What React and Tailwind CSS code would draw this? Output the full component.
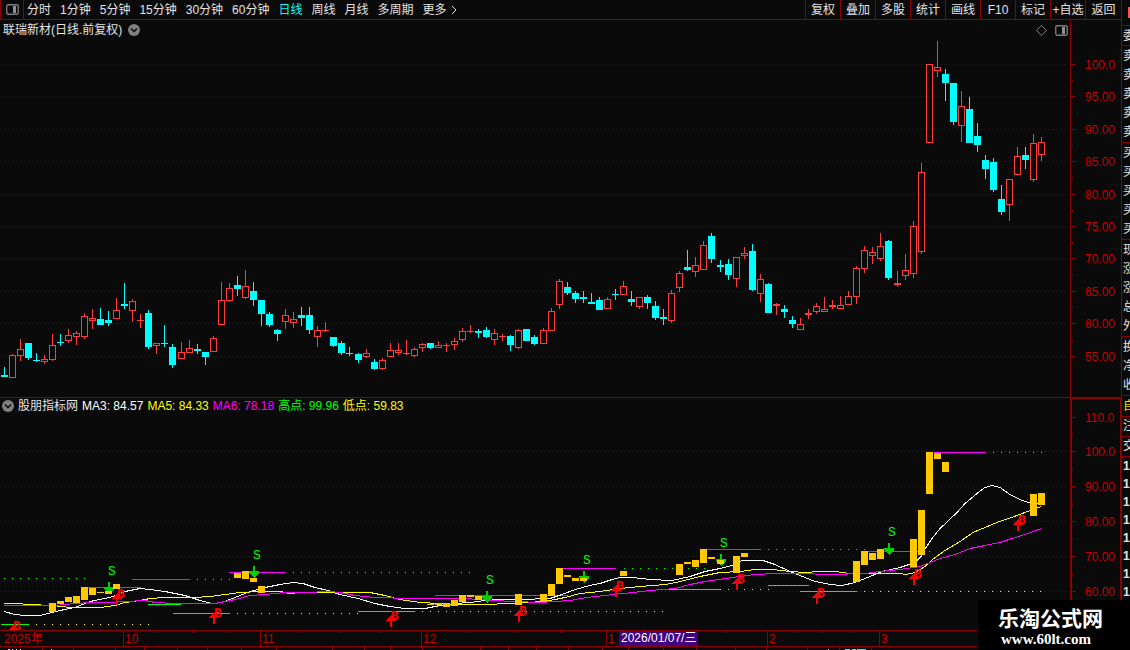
import React, { useState } from "react";

const periods = ["分时", "1分钟", "5分钟", "15分钟", "30分钟", "60分钟", "日线", "周线", "月线", "多周期"];
const tools = ["复权", "叠加", "多股", "统计", "画线", "F10", "标记", "+自选", "返回"];

// high, body top, body bottom, low, 1 = up / 0 = down
const candles = [
  [367, 375, 377, 377, 0], [354, 355, 378, 378, 1], [339, 349, 356, 361, 1], [343, 343, 358, 360, 0],
  [353, 360, 361, 362, 0], [355, 359, 362, 364, 1], [334, 345, 360, 361, 1], [334, 342, 343, 346, 0],
  [329, 335, 341, 343, 1], [331, 333, 337, 345, 1], [313, 316, 337, 339, 1], [309, 318, 321, 329, 1],
  [308, 319, 325, 325, 0], [311, 320, 323, 326, 0], [298, 310, 319, 319, 1], [283, 304, 306, 309, 0],
  [299, 301, 311, 322, 1], [314, 320, 321, 328, 1], [310, 313, 347, 349, 0], [343, 343, 346, 354, 1],
  [325, 343, 344, 347, 0], [344, 347, 365, 368, 0], [342, 352, 359, 359, 1], [340, 348, 353, 353, 1],
  [344, 349, 351, 354, 0], [352, 352, 357, 365, 0], [336, 338, 352, 352, 1], [282, 300, 325, 325, 1],
  [283, 288, 301, 302, 1], [276, 285, 289, 296, 0], [270, 286, 298, 299, 1], [282, 291, 300, 306, 0],
  [300, 300, 314, 326, 0], [312, 314, 325, 327, 0], [329, 330, 334, 341, 0], [309, 315, 322, 329, 1],
  [312, 319, 323, 328, 1], [307, 315, 318, 326, 0], [307, 315, 330, 334, 0], [326, 330, 337, 347, 1],
  [322, 330, 331, 332, 1], [337, 337, 346, 347, 0], [341, 343, 353, 355, 0], [347, 353, 354, 356, 0],
  [353, 354, 360, 363, 0], [349, 353, 357, 358, 1], [359, 362, 369, 370, 0], [358, 360, 369, 370, 1],
  [343, 350, 357, 357, 1], [343, 350, 353, 355, 1], [340, 353, 354, 355, 1], [347, 349, 356, 357, 1],
  [343, 344, 348, 352, 1], [343, 343, 348, 349, 0], [341, 345, 348, 348, 1], [343, 345, 346, 352, 1],
  [338, 341, 345, 350, 1], [328, 331, 340, 342, 1], [325, 331, 332, 333, 1], [329, 331, 333, 338, 0],
  [327, 330, 337, 338, 0], [329, 333, 340, 345, 1], [334, 336, 337, 341, 1], [335, 336, 345, 351, 0],
  [329, 330, 348, 349, 1], [329, 329, 341, 341, 0], [335, 337, 344, 345, 0], [328, 330, 344, 344, 1],
  [308, 311, 331, 331, 1], [279, 281, 305, 309, 1], [282, 287, 293, 295, 0], [291, 293, 299, 303, 0],
  [291, 297, 299, 303, 0], [293, 302, 304, 304, 0], [297, 300, 310, 310, 0], [297, 299, 309, 309, 1],
  [289, 294, 295, 300, 0], [281, 286, 295, 295, 1], [291, 299, 302, 306, 0], [297, 297, 307, 309, 1],
  [295, 297, 303, 309, 0], [301, 306, 318, 320, 0], [309, 317, 319, 325, 0], [290, 293, 321, 323, 1],
  [271, 273, 288, 292, 1], [250, 267, 270, 271, 0], [257, 265, 272, 277, 1], [241, 245, 270, 270, 1],
  [233, 236, 259, 263, 0], [260, 265, 267, 272, 0], [259, 264, 275, 280, 0], [257, 257, 279, 287, 1],
  [247, 253, 256, 259, 1], [244, 251, 290, 291, 0], [274, 279, 294, 302, 1], [283, 284, 313, 313, 0],
  [303, 304, 306, 315, 1], [305, 309, 312, 318, 0], [316, 320, 324, 328, 0], [318, 324, 330, 330, 1],
  [309, 313, 315, 319, 1], [303, 306, 312, 314, 1], [297, 309, 312, 312, 1], [300, 305, 307, 309, 1],
  [296, 305, 309, 309, 1], [291, 296, 305, 305, 1], [266, 268, 297, 304, 1], [246, 250, 269, 273, 1],
  [247, 252, 256, 264, 1], [233, 246, 259, 261, 1], [240, 241, 278, 280, 0], [271, 283, 285, 287, 1],
  [254, 270, 276, 280, 1], [221, 226, 274, 278, 1], [163, 172, 252, 254, 1], [64, 64, 143, 143, 1],
  [41, 67, 71, 77, 1], [69, 74, 83, 101, 0], [83, 83, 122, 125, 0], [91, 106, 126, 142, 1],
  [97, 109, 143, 143, 0], [123, 136, 145, 152, 0], [155, 160, 169, 179, 0], [158, 162, 190, 192, 0],
  [185, 199, 212, 215, 0], [179, 179, 205, 221, 1], [147, 156, 175, 175, 1], [147, 155, 160, 169, 0],
  [134, 143, 180, 182, 1], [137, 142, 155, 161, 1],
];

const priceTicks = [
  ["100.0", 64], ["95.00", 96], ["90.00", 129], ["85.00", 161], ["80.00", 194],
  ["75.00", 226], ["70.00", 258], ["65.00", 291], ["60.00", 323], ["55.00", 356],
];
const indicatorTicks = [
  ["110.0", 417], ["100.0", 451], ["90.00", 486], ["80.00", 521], ["70.00", 556], ["60.00", 591],
];

// x, y, height
const bars = [
  [49, 603, 9], [57, 601, 3], [65, 597, 5], [73, 596, 7], [81, 587, 13], [89, 588, 7], [97, 592, 1],
  [105, 591, 3], [113, 584, 5], [234, 573, 5], [242, 571, 8], [250, 578, 4], [258, 586, 7],
  [427, 604, 1], [435, 603, 2], [443, 603, 4], [451, 600, 6], [459, 595, 7], [467, 595, 2], [475, 596, 4],
  [515, 594, 11], [540, 594, 8], [548, 584, 12], [556, 568, 16], [564, 575, 2], [572, 578, 3],
  [580, 578, 3], [620, 571, 5], [676, 564, 11], [684, 562, 2], [692, 560, 7], [700, 549, 14],
  [708, 557, 2], [717, 560, 4], [733, 556, 17], [741, 553, 4], [853, 561, 21], [861, 551, 14],
  [869, 553, 7], [877, 549, 10], [910, 539, 28], [918, 510, 45], [926, 452, 42], [934, 453, 6],
  [942, 462, 10], [1030, 494, 22], [1038, 493, 12],
];

const ma3 =
  "4,611 15,614 25,615 40,615 52,612 60,610 75,607 90,601 110,597 125,591 140,588 150,589 165,591 185,595 200,600 212,603 222,602 235,597 250,591 265,587 280,584 293,582 303,583 315,587 328,590 340,594 358,598 375,603 390,606 405,608 425,608 440,605 455,603 470,602 485,600 500,599 520,599 550,598 562,594 575,589 590,585 600,583 612,579 620,577 632,577 650,579 672,580 690,576 705,571 720,568 732,565 742,560 763,560 775,564 790,571 800,575 815,581 830,584 842,585 855,582 870,576 882,571 900,567 915,562 921,556 926,547 932,538 940,528 957,512 965,503 977,493 985,487 992,485 1000,487 1010,494 1020,499 1028,502 1036,503 1041,504";
const ma5 =
  "57,606 75,607 100,607 115,605 125,602 140,600 150,598 165,597 195,597 210,596 225,594 240,592 260,591 280,591 290,593 300,592 330,592 370,592 385,595 400,599 420,602 440,603 460,604 490,604 505,603 530,602 550,600 565,597 580,593 600,591 620,588 640,586 666,584 680,581 700,576 720,572 740,571 755,569 772,569 790,571 805,572 820,571 835,571 850,573 880,573 900,573 906,574 915,572 925,566 935,557 945,550 960,541 973,532 997,522 1017,515 1030,510 1041,506";
const ma6 =
  "4,605 55,605 65,604 75,603 92,602 110,602 125,601 145,600 155,602 175,603 215,603 225,601 235,599 250,595 265,594 285,592 305,592 330,591 340,592 355,595 375,597 410,598 465,598 492,600 540,602 570,600 587,597 613,594 633,592 650,590 675,588 690,584 705,581 725,578 740,576 755,574 775,573 800,573 830,574 865,573 880,571 900,569 920,566 930,562 940,558 955,554 970,548 985,545 1000,542 1012,538 1025,534 1041,528";

// x1, x2, y
const highs = [
  [88, 141, 587], [132, 190, 579], [229, 286, 572], [435, 568, 595], [563, 616, 568],
  [707, 761, 549], [867, 918, 551], [934, 986, 452],
];
const lows = [
  [1, 29, 624], [148, 181, 604], [173, 230, 613], [358, 415, 611], [663, 720, 589], [768, 809, 585],
  [800, 857, 591],
];
const highDots = [
  [4, 86, 578], [197, 230, 579], [293, 472, 572], [624, 705, 568], [768, 866, 549], [929, 930, 551],
  [993, 1044, 452],
];
const lowDots = [[36, 151, 624], [237, 359, 613], [422, 665, 611], [720, 771, 589], [864, 1044, 591]];

const sells = [[109, 582], [254, 566], [487, 591], [584, 571], [721, 554], [889, 543]];
const buys = [
  [13, 625], [117, 593], [214, 612], [391, 615], [519, 610], [616, 585], [737, 578], [817, 592],
  [914, 573], [1018, 519],
];

const months = [["10", 123], ["11", 260], ["12", 421], ["1", 606], ["2", 767], ["3", 879]];
const weekTicks = [157, 192, 226, 300, 341, 381, 467, 514, 560, 727, 795, 823, 851];
const footTicks = [
  42, 73, 115, 144, 177, 207, 241, 276, 332, 364, 390, 422, 480, 508, 536, 568, 602, 628, 663, 696,
  735, 766, 807, 839, 871,
];

const quoteGroups = [["卖", "卖", "卖", "卖", "卖"], ["买", "买", "买", "买", "买"], ["现", "涨", "涨", "总", "外"], ["换", "净", "收"]];

const candleX = (i) => Math.floor(4.025 + i * 8.045);

const PanelIcon = () => (
  <svg viewBox="0 0 13 11" className="h-[11px] w-[13px]" aria-hidden="true">
    <rect x="0.75" y="0.75" width="11.5" height="9.5" rx="1.5" fill="none" stroke="#808080" strokeWidth="1.3" />
    <rect x="7" y="2" width="3" height="7" fill="#909090" />
  </svg>
);

const CircleChevron = () => (
  <svg viewBox="0 0 12 12" className="h-3 w-3" aria-hidden="true">
    <circle cx="6" cy="6" r="6" fill="#808080" />
    <path d="M3 4.5 L6 7.5 L9 4.5" fill="none" stroke="#0a0a0a" strokeWidth="1.5" />
  </svg>
);

const Candle = ({ x, data }) => {
  const [high, top, bottom, low, up] = data;
  if (!up) {
    return (
      <g fill="#00ffff">
        <rect x={x} y={high} width="1" height={low - high} />
        <rect x={x - 3} y={top} width="7" height={bottom - top} />
      </g>
    );
  }
  return (
    <g fill="#ff3c3c">
      <rect x={x} y={high} width="1" height={top - high} />
      <rect x={x} y={bottom} width="1" height={low - bottom} />
      {bottom - top < 3 ? (
        <rect x={x - 3} y={top} width="7" height={bottom - top} />
      ) : (
        <rect x={x - 2.5} y={top + 0.5} width="6" height={bottom - top - 1} fill="none" stroke="#ff3c3c" />
      )}
    </g>
  );
};

const Segments = ({ items, color, dash }) =>
  items.map(([x1, x2, y]) => (
    <line key={`${x1}-${y}`} x1={x1} x2={x2} y1={y + 0.5} y2={y + 0.5} stroke={color} strokeDasharray={dash} />
  ));

const Scale = ({ ticks, line }) => (
  <g>
    {ticks.map(([label, y], i) => (
      <g key={label}>
        <rect x="1071" y={y} width="5" height="1" fill="#8b0000" />
        {i < ticks.length - 1 && (
          <rect x="1071" y={Math.round((y + ticks[i + 1][1]) / 2)} width={line} height="1" fill="#8b0000" />
        )}
        <text x="1085" y={y + 5} fontSize="12" fill="#c80000">{label}</text>
      </g>
    ))}
  </g>
);

const PriceChart = () => (
  <svg viewBox="0 20 1121 377" className="block h-auto w-full" shapeRendering="crispEdges" role="img" aria-label="日线">
    {priceTicks.map(([label, y]) => (
      <line key={label} x1="1" x2="1068" y1={y + 0.5} y2={y + 0.5} stroke="#6e0a0a" strokeDasharray="1 3" />
    ))}
    {candles.map((c, i) => (
      <Candle key={i} x={candleX(i)} data={c} />
    ))}
    <rect x="1070" y="20" width="1" height="377" fill="#8b0000" />
    <Scale ticks={priceTicks} line="2" />
  </svg>
);

const IndicatorChart = () => (
  <svg viewBox="0 397 1121 253" className="block h-auto w-full" shapeRendering="crispEdges" role="img" aria-label="股朋指标网">
    {indicatorTicks.slice(1).map(([label, y]) => (
      <line key={label} x1="1" x2="1068" y1={y + 0.5} y2={y + 0.5} stroke="#6e0a0a" strokeDasharray="1 3" />
    ))}
    <rect x="0" y="397" width="1121" height="1" fill="#8b0000" />

    <Segments items={highDots} color="#00ff00" dash="1 7" />
    <Segments items={lowDots} color="#ffff00" dash="1 7" />
    <Segments items={highs} color="#ff00ff" />
    <Segments items={lows} color="#00ff00" />
    <g fill="none" transform="translate(0 0.5)">
      <polyline points={ma3} stroke="#ffffff" />
      <polyline points="4,603 22,603 24,604 41,604" stroke="#ffff00" />
      <polyline points={ma5} stroke="#ffff00" />
      <polyline points={ma6} stroke="#ff00ff" />
    </g>

    {sells.map(([x, y]) => (
      <g key={x}>
        <path d={`M${x - 1} ${y}h2v5h4v2l-4 4l-1 1l-1 -1l-4 -4v-2h4z`} fill="#00d200" />
        <text x={x - 1} y={y - 7} fontSize="13" fill="#00ff00" fontFamily="Liberation Mono, monospace">S</text>
      </g>
    ))}
    {bars.map(([x, y, h]) => (
      <rect key={x} x={x} y={y} width="7" height={h} fill="#ffc800" />
    ))}
    {buys.map(([x, y]) => (
      <g key={x} fill="#ff0000">
        <path d={`M${x - 1} ${y + 12}h2v-6h4v-1l-4 -4l-1 -1l-1 1l-4 4v1h4z`} />
        <text x={x} y={y + 5} fontSize="13" fontWeight="bold" fontFamily="Liberation Mono, monospace">B</text>
      </g>
    ))}

    {/* value axis frame */}
    <rect x="1070" y="397" width="2" height="233" fill="#8b0000" />
    <rect x="1070" y="397" width="51" height="2" fill="#8b0000" />
    <rect x="1120" y="397" width="1" height="253" fill="#8b0000" />
    <Scale ticks={indicatorTicks} line="2" />

    {/* time axis */}
    <rect x="0" y="630" width="1121" height="20" fill="#0a0a0a" />
    <rect x="0" y="630" width="1121" height="1" fill="#8b0000" />
    <rect x="0" y="646" width="1121" height="1" fill="#8b0000" />
    {weekTicks.map((x) => (
      <rect key={x} x={x} y="631" width="1" height="2" fill="#8b0000" />
    ))}
    {footTicks.map((x) => (
      <rect key={x} x={x} y="647" width="1" height="3" fill="#8b0000" />
    ))}
    <g fontSize="12" fill="#c80000">
      <text x="4" y="643">2025年</text>
      {months.map(([label, x]) => (
        <g key={x}>
          <rect x={x} y="631" width="1" height="15" fill="#8b0000" />
          <text x={x + 2} y="643">{label}</text>
        </g>
      ))}
    </g>
    <rect x="619" y="631" width="79" height="15" fill="#400080" />
    <text x="621" y="642" fontSize="12" fill="#ffffff">2026/01/07/三</text>
    <g fill="#e0e0e0">
      <rect x="8" y="649" width="2" height="1" />
      <rect x="12" y="649" width="1" height="1" />
      <rect x="16" y="649" width="1" height="1" />
      <rect x="20" y="649" width="1" height="1" />
      <rect x="51" y="649" width="1" height="1" />
      <rect x="828" y="649" width="1" height="1" />
    </g>
    <g fill="#00ffff">
      <rect x="845" y="649" width="5" height="1" />
      <rect x="852" y="649" width="4" height="1" />
      <rect x="857" y="649" width="9" height="1" />
    </g>
  </svg>
);

const App = () => {
  const [period, setPeriod] = useState("日线");

  return (
    <div className="relative flex min-h-screen items-stretch overflow-hidden bg-[#0a0a0a] font-['Liberation_Sans','Noto_Sans_CJK_SC',sans-serif] text-xs text-[#e4e4e4]">
      <div className="min-w-0 flex-1">
        {/* Toolbar */}
        <nav className="flex h-5 items-stretch justify-between border-b border-[#8b0000] whitespace-nowrap">
          <div className="flex items-center gap-[9px]">
            <button aria-label="面板" className="-mr-1.5 flex h-full w-6 items-center justify-center border-x border-[#8b0000]">
              <PanelIcon />
            </button>
            {periods.map((p) => (
              <button key={p} onClick={() => setPeriod(p)} className={p === period ? "text-[#00ffff]" : ""}>
                {p}
              </button>
            ))}
            <button className="flex items-center gap-1">
              更多
              <svg viewBox="0 0 6 10" className="h-[10px] w-[6px]" aria-hidden="true">
                <path d="M1 1 L5 5 L1 9" fill="none" stroke="#e4e4e4" />
              </svg>
            </button>
          </div>
          <div className="flex">
            {tools.map((t) => (
              <button key={t} className="w-[35px] border-l border-[#8b0000] last:w-9">
                {t}
              </button>
            ))}
          </div>
        </nav>

        {/* Candles */}
        <section className="relative">
          <PriceChart />
          <div className="absolute inset-x-0 top-0 flex h-5 items-center justify-between pr-[53px] pl-[3px]">
            <h1 className="flex items-center gap-[6px]">
              联瑞新材(日线.前复权)
              <button aria-label="展开">
                <CircleChevron />
              </button>
            </h1>
            <div className="flex items-center gap-2">
              <svg viewBox="0 0 11 11" className="h-[11px] w-[11px]" aria-hidden="true">
                <path d="M5.5 0.5 L10.5 5.5 L5.5 10.5 L0.5 5.5 Z" fill="none" stroke="#808080" />
              </svg>
              <button aria-label="侧栏">
                <PanelIcon />
              </button>
            </div>
          </div>
        </section>

        {/* Indicator */}
        <section className="relative">
          <IndicatorChart />
          <div className="absolute top-px left-0 flex h-4 items-center gap-1 pl-[2px] whitespace-nowrap">
            <button aria-label="展开">
              <CircleChevron />
            </button>
            <h2>股朋指标网</h2>
            <span className="text-white">MA3: 84.57</span>
            <span className="text-[#ffff00]">MA5: 84.33</span>
            <span className="text-[#ff00ff]">MA6: 78.18</span>
            <span className="text-[#00ff00]">高点: 99.96</span>
            <span className="text-[#ffff00]">低点: 59.83</span>
          </div>
        </section>
      </div>

      {/* Quote panel, only its edge is open */}
      <aside className="relative w-[9px] shrink-0 overflow-hidden border-l border-[#8b0000] whitespace-nowrap">
        <div className="flex h-[25px] justify-end pt-[7px]">
          <span className="h-[11px] w-[2px] bg-[#ff5050]" />
        </div>
        <div className="h-5 border-t border-[#8b0000] pl-px leading-5">委</div>
        {quoteGroups.map((group, i) => (
          <div key={i} className="border-t border-[#8b0000] pt-px pl-px leading-[19px]">
            {group.map((q, j) => (
              <div key={j}>{q}</div>
            ))}
          </div>
        ))}
        <div className="border-t border-[#8b0000] pl-px leading-5 text-[#e0e000]">自</div>
        <div className="border-t border-[#8b0000] pl-px leading-[19px]">注</div>
        <div className="border-t border-[#8b0000] pl-px leading-[19px]">交</div>
        <div className="border-t border-[#8b0000] pl-px text-xs leading-[18px] font-bold">
          {Array.from({ length: 8 }, (_, i) => (
            <div key={i}>1</div>
          ))}
        </div>
      </aside>

      <div className="absolute right-0 bottom-0 flex h-[50px] w-[152px] flex-col items-start justify-center bg-black pt-1 pl-5 text-white">
        <span className="text-[21px] leading-6 font-bold">乐淘公式网</span>
        <a href="#" className="pl-[3px] font-['Liberation_Serif',serif] text-[15px] leading-4 font-bold">www.60lt.com</a>
      </div>
    </div>
  );
};

export default App;
